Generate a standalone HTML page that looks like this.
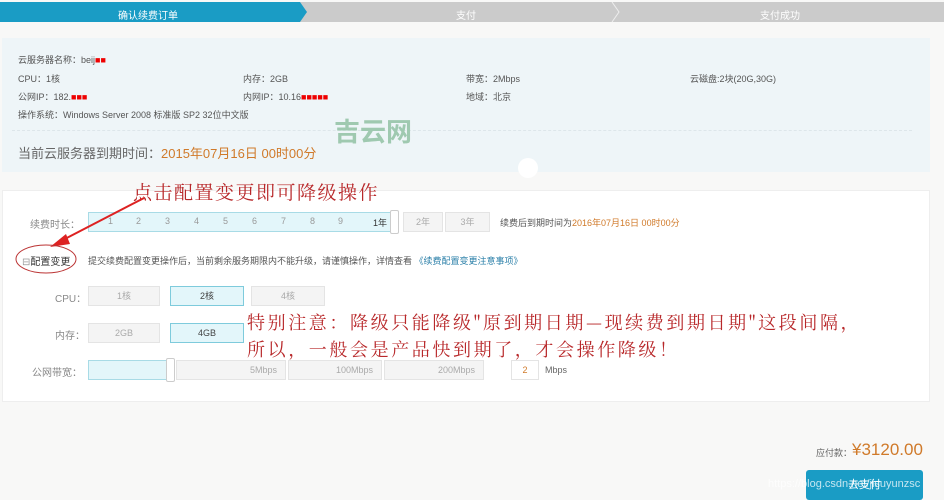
<!DOCTYPE html>
<html><head><meta charset="utf-8"><style>
*{margin:0;padding:0;box-sizing:border-box}
body{width:944px;height:500px;background:#f8f8f7;font-family:"Liberation Sans","Noto Sans CJK SC",sans-serif;font-size:9px;color:#555;position:relative;overflow:hidden}
.a{position:absolute;white-space:nowrap}
.box{position:absolute;border:1px solid #e4e4e4;background:#f4f4f4;color:#aaa;text-align:center;font-size:9px}
.sel{background:#e3f6fa;border-color:#7ecbdc;color:#444}
.red{color:#b8282a;font-family:"Noto Serif CJK SC","Noto Sans CJK SC",serif}
</style></head><body>
<svg class="a" style="left:0;top:2px" width="944" height="21">
<rect x="0" y="0" width="944" height="20" fill="#cbcbcb"/>
<polygon points="0,0 300,0 307,10 300,20 0,20" fill="#1a9cc5"/>
<polyline points="612,0 619,10 612,20" fill="none" stroke="#eee" stroke-width="1"/>
</svg>
<div class="a" style="left:118px;top:7px;color:#fff;font-size:10px">确认续费订单</div>
<div class="a" style="left:456px;top:7px;color:#fff;font-size:10px">支付</div>
<div class="a" style="left:760px;top:7px;color:#fff;font-size:10px">支付成功</div>

<div class="a" style="left:2px;top:38px;width:928px;height:134px;background:#eef5f8"></div>
<div class="a" style="left:18px;top:53px">云服务器名称：beij<span style="color:#e00">■■</span></div>
<div class="a" style="left:18px;top:72px">CPU：1核</div>
<div class="a" style="left:243px;top:72px">内存：2GB</div>
<div class="a" style="left:466px;top:72px">带宽：2Mbps</div>
<div class="a" style="left:690px;top:72px">云磁盘:2块(20G,30G)</div>
<div class="a" style="left:18px;top:90px">公网IP：182.<span style="color:#e00">■■■</span></div>
<div class="a" style="left:243px;top:90px">内网IP：10.16<span style="color:#e00">■■■■■</span></div>
<div class="a" style="left:466px;top:90px">地域：北京</div>
<div class="a" style="left:18px;top:108px">操作系统：Windows Server 2008 标准版 SP2 32位中文版</div>
<div class="a" style="left:12px;top:130px;width:900px;border-top:1px dashed #dde6ea"></div>
<div class="a" style="left:18px;top:143px;font-size:13px;color:#666">当前云服务器到期时间：<span style="color:#d07a2a">2015年07月16日 00时00分</span></div>
<div class="a" style="left:334px;top:112px;font-size:26px;font-weight:bold;color:#9fc9b0;font-family:'Noto Sans CJK SC',sans-serif">吉云网</div>
<div class="a" style="left:518px;top:158px;width:20px;height:20px;border-radius:50%;background:#fff"></div>

<div class="a" style="left:2px;top:190px;width:928px;height:212px;background:#fff;border:1px solid #eee"></div>
<div class="a red" style="left:133px;top:178px;font-size:19px;letter-spacing:1.5px">点击配置变更即可降级操作</div>
<div class="a" style="left:30px;top:216px;color:#888;font-size:10px">续费时长：</div>
<div class="a" style="left:88px;top:212px;width:310px;height:20px;background:#e3f6fa;border:1px solid #a8dbe6"></div>
<div class="a" style="left:88px;top:216px;color:#999;font-size:9px;width:300px">
<span style="position:absolute;left:20px">1</span><span style="position:absolute;left:48px">2</span><span style="position:absolute;left:77px">3</span><span style="position:absolute;left:106px">4</span><span style="position:absolute;left:135px">5</span><span style="position:absolute;left:164px">6</span><span style="position:absolute;left:193px">7</span><span style="position:absolute;left:222px">8</span><span style="position:absolute;left:250px">9</span><span style="position:absolute;left:285px;color:#333">1年</span></div>
<div class="a" style="left:390px;top:210px;width:9px;height:24px;background:#fff;border:1px solid #ccc;border-radius:2px"></div>
<div class="box" style="left:403px;top:212px;width:40px;height:20px;line-height:18px">2年</div>
<div class="box" style="left:445px;top:212px;width:45px;height:20px;line-height:18px">3年</div>
<div class="a" style="left:500px;top:216px">续费后到期时间为<span style="color:#d07a2a">2016年07月16日 00时00分</span></div>

<svg class="a" style="left:14px;top:190px" width="150" height="90"><line x1="130" y1="8" x2="45" y2="52" stroke="#d22" stroke-width="2"/><polygon points="36,57 52,44 56,54" fill="#d22"/><ellipse cx="32" cy="69" rx="30" ry="14" fill="none" stroke="#b33" stroke-width="1"/></svg>
<div class="a" style="left:22px;top:253px;font-size:10px;color:#333"><span style="color:#999">⊟</span>配置变更</div>
<div class="a" style="left:88px;top:254px">提交续费配置变更操作后，当前剩余服务期限内不能升级，请谨慎操作，详情查看 <span style="color:#2a7fa8">《续费配置变更注意事项》</span></div>

<div class="a" style="left:55px;top:290px;color:#888;font-size:10px">CPU：</div>
<div class="box" style="left:88px;top:286px;width:72px;height:20px;line-height:18px">1核</div>
<div class="box sel" style="left:170px;top:286px;width:74px;height:20px;line-height:18px">2核</div>
<div class="box" style="left:251px;top:286px;width:74px;height:20px;line-height:18px">4核</div>
<div class="a" style="left:55px;top:327px;color:#888;font-size:10px">内存：</div>
<div class="box" style="left:88px;top:323px;width:72px;height:20px;line-height:18px">2GB</div>
<div class="box sel" style="left:170px;top:323px;width:74px;height:20px;line-height:18px">4GB</div>
<div class="a red" style="left:247px;top:309px;font-size:18px;line-height:27px;letter-spacing:2.6px">特别注意：降级只能降级"原到期日期—现续费到期日期"这段间隔，<br>所以，一般会是产品快到期了，才会操作降级！</div>
<div class="a" style="left:32px;top:364px;color:#888;font-size:10px">公网带宽：</div>
<div class="a" style="left:88px;top:360px;width:80px;height:20px;background:#e3f6fa;border:1px solid #a8dbe6"></div>
<div class="a" style="left:166px;top:358px;width:9px;height:24px;background:#fff;border:1px solid #ccc;border-radius:2px"></div>
<div class="box" style="left:176px;top:360px;width:110px;height:20px;line-height:18px;text-align:right;padding-right:8px">5Mbps</div>
<div class="box" style="left:288px;top:360px;width:94px;height:20px;line-height:18px;text-align:right;padding-right:8px">100Mbps</div>
<div class="box" style="left:384px;top:360px;width:100px;height:20px;line-height:18px;text-align:right;padding-right:8px">200Mbps</div>
<div class="box" style="left:511px;top:360px;width:28px;height:20px;line-height:18px;background:#fff;color:#d07a2a">2</div>
<div class="a" style="left:545px;top:365px;color:#666">Mbps</div>

<div class="a" style="left:816px;top:446px;color:#666">应付款：</div>
<div class="a" style="left:852px;top:440px;font-size:17px;color:#d07a2a">¥3120.00</div>
<div class="a" style="left:806px;top:470px;width:117px;height:30px;background:#1a9cc5;border-radius:3px;color:#fff;font-size:11px;text-align:center;line-height:30px">去支付</div>
<div class="a" style="left:768px;top:478px;color:rgba(255,255,255,.75);font-size:11px">https://blog.csdn.net/jisuyunzsc</div>
</body></html>
